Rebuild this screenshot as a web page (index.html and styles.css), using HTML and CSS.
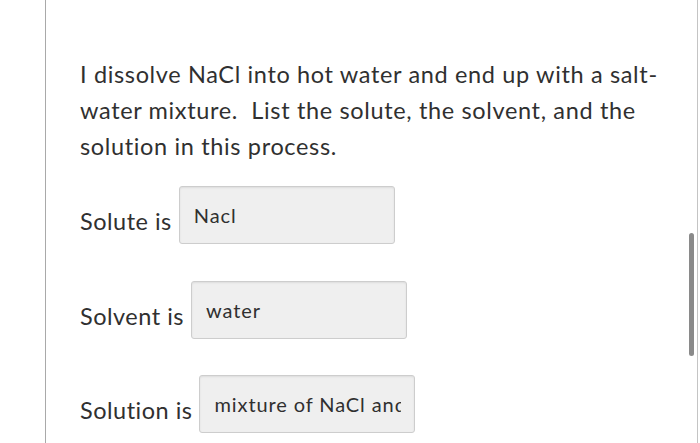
FILE: index.html
```html
<!DOCTYPE html>
<html>
<head>
<meta charset="utf-8">
<link rel="stylesheet" href="styles.css">
</head>
<body>
<div class="page">
  <div class="panel">
    <p class="question">I dissolve NaCl into hot water and end up with a salt-water mixture.&nbsp; List the solute, the solvent, and the solution in this process.</p>
    <div class="rows">
      <div class="row">
        <span class="label">Solute is</span>
        <div class="field"><span class="field-text">Nacl</span></div>
      </div>
      <div class="row">
        <span class="label">Solvent is</span>
        <div class="field"><span class="field-text">water</span></div>
      </div>
      <div class="row">
        <span class="label">Solution is</span>
        <div class="field"><span class="field-text">mixture of NaCl and water</span></div>
      </div>
    </div>
  </div>
  <div class="scrollbar"></div>
</div>
</body>
</html>
```

FILE: styles.css
```css
html, body {
  margin: 0;
  padding: 0;
  background: #ffffff;
}
body {
  font-family: Lato, "Open Sans", sans-serif;
  color: #303030;
  width: 700px;
  height: 443px;
  overflow: hidden;
}
.page {
  position: relative;
  height: 443px;
}
.panel {
  margin-left: 45px;
  width: 653px;
  height: 443px;
  box-sizing: border-box;
  border-left: 1px solid #a9a9a9;
  border-right: 1px solid #c4c4c4;
  padding-left: 34px;
  padding-right: 20px;
}
.question {
  margin: 0;
  padding-top: 56px;
  font-size: 23.5px;
  letter-spacing: 0.65px;
  line-height: 36px;
  width: 595px;
}
.rows {
  display: flex;
  flex-direction: column;
  gap: 36.5px;
  margin-top: 22px;
}
.row {
  display: flex;
  align-items: flex-start;
  gap: 7px;
}
.label {
  font-size: 23.5px;
  letter-spacing: 0.5px;
  line-height: 36px;
  margin-top: 17px;
  white-space: nowrap;
}
.field {
  box-sizing: border-box;
  width: 216px;
  height: 58px;
  background: #efefef;
  border: 1px solid #cdcdcd;
  border-radius: 3px;
  box-shadow: inset 0 1px 2px rgba(0,0,0,0.08);
  padding: 17px 13px 0 14px;
}
.field-text {
  display: block;
  font-size: 20px;
  letter-spacing: 0.9px;
  line-height: 22px;
  white-space: nowrap;
  overflow: hidden;
}
.scrollbar {
  position: absolute;
  left: 689px;
  top: 233px;
  width: 5px;
  height: 123px;
  border-radius: 3px;
  background: #8a8a8a;
}
```
